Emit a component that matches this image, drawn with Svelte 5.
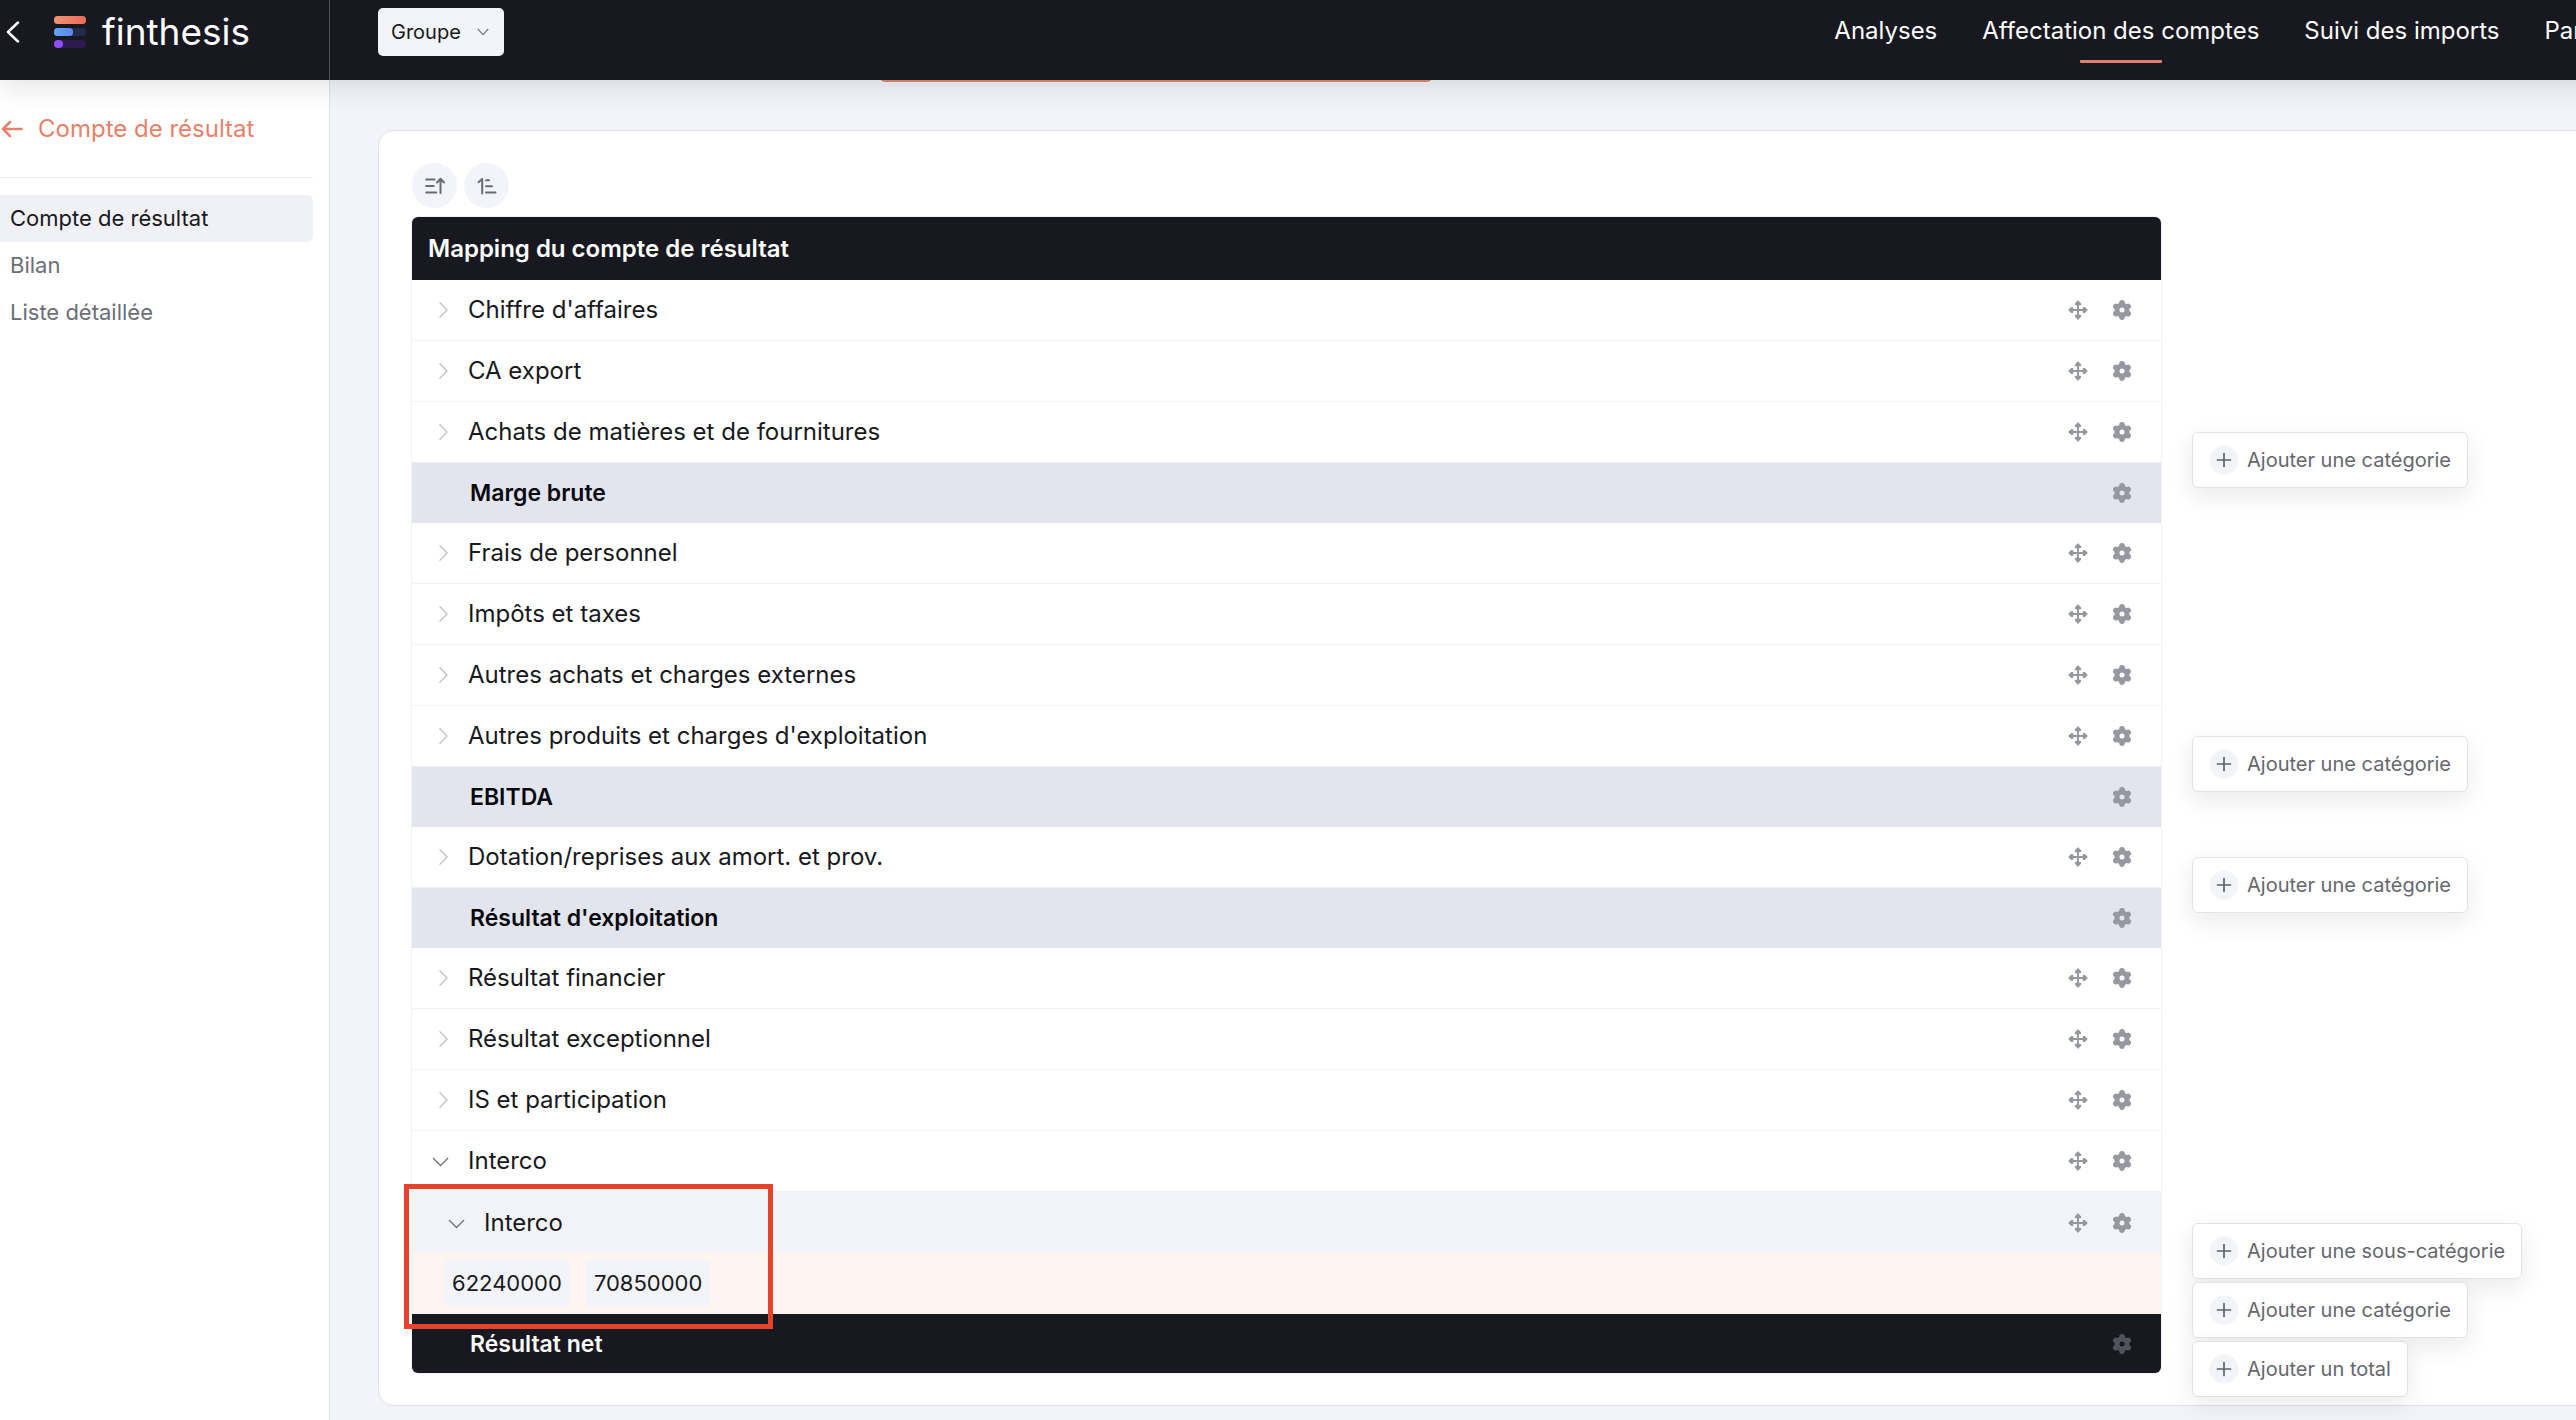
<script>
  const navItems = ['Analyses', 'Affectation des comptes', 'Suivi des imports', 'Paramètres'];
  const activeNav = 'Affectation des comptes';

  const sideLinks = ['Compte de résultat', 'Bilan', 'Liste détaillée'];
  const activeSide = 'Compte de résultat';

  const rows = [
    { label: "Chiffre d'affaires", kind: 'category' },
    { label: 'CA export', kind: 'category' },
    { label: 'Achats de matières et de fournitures', kind: 'category' },
    { label: 'Marge brute', kind: 'total' },
    { label: 'Frais de personnel', kind: 'category' },
    { label: 'Impôts et taxes', kind: 'category' },
    { label: 'Autres achats et charges externes', kind: 'category' },
    { label: "Autres produits et charges d'exploitation", kind: 'category' },
    { label: 'EBITDA', kind: 'total' },
    { label: 'Dotation/reprises aux amort. et prov.', kind: 'category' },
    { label: "Résultat d'exploitation", kind: 'total' },
    { label: 'Résultat financier', kind: 'category' },
    { label: 'Résultat exceptionnel', kind: 'category' },
    { label: 'IS et participation', kind: 'category' },
    { label: 'Interco', kind: 'category', open: true },
    { label: 'Interco', kind: 'sub', open: true },
    { accounts: ['62240000', '70850000'], kind: 'accounts' },
    { label: 'Résultat net', kind: 'final' }
  ];

  const lobes = [0, 60, 120, 180, 240, 300];
  const arms = [0, 90, 180, 270];
</script>

{#snippet chevron(open)}
  {#if open}
    <svg class="chev open" viewBox="0 0 18 18" aria-hidden="true"><path d="M-1 6 6.500 13.500 14 6" /></svg>
  {:else}
    <svg class="chev" viewBox="0 0 18 18" aria-hidden="true"><path d="M5.500 1.200 13 9l-7.500 7.800" /></svg>
  {/if}
{/snippet}

{#snippet gear()}
  <svg class="icon" viewBox="0 0 20 20" aria-hidden="true">
    <circle cx="10" cy="10" r="5" fill="none" stroke="currentColor" stroke-width="5" />
    {#each lobes as angle}
      <circle cx="10" cy="2.900" r="2.800" fill="currentColor" transform="rotate({angle} 10 10)" />
    {/each}
  </svg>
{/snippet}

{#snippet move()}
  <svg class="icon" viewBox="0 0 20 20" aria-hidden="true">
    <path d="M10 3v14M3 10h14" fill="none" stroke="currentColor" stroke-width="1.900" />
    {#each arms as angle}
      <path
        d="M10 1 12.500 3.600V4.600H7.500V3.600Z"
        fill="currentColor"
        stroke="currentColor"
        stroke-width="1.200"
        stroke-linejoin="round"
        transform="rotate({angle} 10 10)"
      />
    {/each}
  </svg>
{/snippet}

{#snippet addButton(text, place)}
  <button type="button" class="add {place}">
    <svg viewBox="0 0 30 30" aria-hidden="true">
      <circle cx="15" cy="15" r="14.500" fill="#f3f4fa" />
      <path d="M15 8.500v13M8.500 15h13" fill="none" stroke="#60626a" stroke-width="1.700" stroke-linecap="round" />
    </svg>
    <span>{text}</span>
  </button>
{/snippet}

<div class="viewport">
  <div class="page">
    <header>
      <div class="brand">
        <button type="button" class="collapse" aria-label="Réduire le menu">
          <svg viewBox="0 0 14 22" aria-hidden="true"><path d="M12 1.500 2 11l10 9.500" /></svg>
        </button>
        <a href="#accueil" class="logo">
          <svg viewBox="0 0 32 32" aria-hidden="true">
            <defs>
              <linearGradient id="bar-coral"><stop offset="0" stop-color="#f0936f" /><stop offset="1" stop-color="#ee6a5b" /></linearGradient>
              <linearGradient id="bar-blue"><stop offset="0" stop-color="#62a6f8" /><stop offset="1" stop-color="#5b84f3" /></linearGradient>
            </defs>
            <rect width="32" height="8" rx="3.500" fill="url(#bar-coral)" />
            <rect y="12" width="32" height="8" rx="3.500" fill="#212b4a" />
            <rect y="12" width="19" height="8" rx="3.500" fill="url(#bar-blue)" />
            <rect y="24" width="32" height="8" rx="3.500" fill="#2c1b4c" />
            <rect y="24" width="9" height="8" rx="4" fill="#8d4df5" />
          </svg>
          <span>finthesis</span>
        </a>
      </div>
      <div class="bar">
        <label class="scope">
          <select aria-label="Périmètre"><option>Groupe</option></select>
          <svg viewBox="0 0 12 8" aria-hidden="true"><path d="M.8 1 6 6.600 11.200 1" /></svg>
        </label>
        <nav class="top">
          {#each navItems as item}
            <a href="#nav" class:active={item === activeNav}>{item}</a>
          {/each}
        </nav>
      </div>
    </header>

    <div class="body">
      <aside class="side">
        <a href="#retour" class="back">
          <svg viewBox="0 0 22 18" aria-hidden="true"><path d="M20.500 9H2M9 2 2 9l7 7" /></svg>
          <span>Compte de résultat</span>
        </a>
        <nav>
          {#each sideLinks as link}
            <a href="#section" class:active={link === activeSide}>{link}</a>
          {/each}
        </nav>
      </aside>

      <main>
        <div class="notice"></div>
        <section class="card">
          <div class="tools">
            <button type="button" aria-label="Tout replier">
              <svg viewBox="0 0 20 18" aria-hidden="true"><path d="M1.200 2.500h8.500M1.200 9h7.500M1.200 15.500h10M15.500 16V2.500M12 5.500l3.500-3.700L19 5.500" /></svg>
            </button>
            <button type="button" aria-label="Trier">
              <svg viewBox="0 0 20 18" aria-hidden="true"><path d="M5.200 16.500V2L1.500 5.200M9 3.200h3M9 9.300h6M9 15.500h9.500" /></svg>
            </button>
          </div>

          <div class="columns">
            <div class="mapping">
              <table>
                <thead>
                  <tr><th colspan="2" scope="col">Mapping du compte de résultat</th></tr>
                </thead>
                <tbody>
                  {#each rows as row}
                    <tr class={row.kind}>
                      {#if row.kind === 'accounts'}
                        <td colspan="2">
                          <div class="chips">
                            {#each row.accounts as account}<span>{account}</span>{/each}
                          </div>
                        </td>
                      {:else}
                        <td>
                          <div class="name">
                            {#if row.kind === 'category' || row.kind === 'sub'}
                              <button type="button" aria-label="Déplier" aria-expanded={!!row.open}>{@render chevron(row.open)}</button>
                            {/if}
                            <span>{row.label}</span>
                          </div>
                        </td>
                        <td>
                          <div class="actions">
                            {#if row.kind === 'category' || row.kind === 'sub'}
                              <button type="button" aria-label="Déplacer">{@render move()}</button>
                            {/if}
                            <button type="button" aria-label="Paramètres">{@render gear()}</button>
                          </div>
                        </td>
                      {/if}
                    </tr>
                  {/each}
                </tbody>
              </table>
              <div class="highlight"></div>
            </div>

            <div class="adders">
              {@render addButton('Ajouter une catégorie', 'margin')}
              {@render addButton('Ajouter une catégorie', 'ebitda')}
              {@render addButton('Ajouter une catégorie', 'operating')}
              {@render addButton('Ajouter une sous-catégorie', 'nested')}
              {@render addButton('Ajouter une catégorie', 'stacked')}
              {@render addButton('Ajouter un total', 'stacked')}
            </div>
          </div>
        </section>
      </main>
    </div>
  </div>
</div>

<style>
  :global(body) {
    background: #f3f4fa;
  }
  .viewport {
    overflow: hidden;
    font-family: Inter, 'Open Sans', sans-serif;
    color: #181820;
  }
  .viewport * {
    box-sizing: border-box;
  }
  .page {
    display: flex;
    flex-direction: column;
    width: calc(100% + 98px);
    min-height: 100vh;
  }
  button {
    display: flex;
    align-items: center;
    justify-content: center;
    padding: 0;
    border: 0;
    background: none;
    color: inherit;
    font: inherit;
    cursor: pointer;
  }
  a {
    color: inherit;
    text-decoration: none;
  }
  svg {
    flex: none;
    display: block;
  }

  header {
    position: relative;
    z-index: 2;
    display: flex;
    height: 80px;
    background: #181820;
    color: #fff;
    box-shadow: 0 4px 30px rgba(24, 24, 32, 0.14);
  }
  .brand {
    display: flex;
    gap: 34px;
    width: 330px;
    height: 64px;
    align-items: center;
    padding-left: 6px;
  }
  .collapse svg {
    width: 14px;
    height: 22px;
    fill: none;
    stroke: #fff;
    stroke-width: 2.5;
    stroke-linecap: round;
    stroke-linejoin: round;
  }
  .logo {
    display: flex;
    align-items: center;
    gap: 16px;
    font-size: 37px;
    line-height: 40px;
  }
  .logo svg {
    width: 32px;
    height: 32px;
  }
  .bar {
    display: flex;
    flex: 1;
    align-items: flex-start;
    justify-content: space-between;
    padding: 8px 0 0 48px;
    border-left: 1px solid #4f5058;
    margin-left: -1px;
  }
  .scope {
    position: relative;
    display: flex;
    align-items: center;
  }
  select {
    height: 48px;
    padding: 0 43px 0 13px;
    border: 0;
    border-radius: 5px;
    background: #f3f4fa;
    color: #181820;
    font: 400 20px Inter, sans-serif;
    appearance: none;
  }
  .scope svg {
    position: absolute;
    right: 15px;
    width: 12px;
    height: 8px;
    fill: none;
    stroke: #777981;
    stroke-width: 1.2;
    pointer-events: none;
  }
  .top {
    display: flex;
    gap: 45px;
    font-size: 24px;
    line-height: 28px;
    padding-top: 9px;
  }
  .top a {
    display: flex;
    flex-direction: column;
    align-items: center;
  }
  .top .active::after {
    content: '';
    width: 82px;
    height: 3px;
    margin-top: 15px;
    border-radius: 1px;
    background: #de826e;
  }

  .body {
    display: flex;
    flex: 1;
  }
  .side {
    width: 330px;
    padding-right: 16px;
    border-right: 1px solid #e0e1e7;
    background: #fff;
  }
  .back {
    display: flex;
    align-items: center;
    gap: 15px;
    height: 98px;
    padding-left: 1px;
    border-bottom: 1px solid #eeeff2;
    color: #e5816a;
    font-size: 24px;
    line-height: 32px;
  }
  .back svg {
    width: 22px;
    height: 18px;
    fill: none;
    stroke: currentColor;
    stroke-width: 2.6;
    stroke-linecap: round;
    stroke-linejoin: round;
  }
  .side nav {
    padding-top: 17px;
  }
  .side nav a {
    display: block;
    padding: 8px 10px 9px;
    color: #6c6e76;
    font-size: 22px;
    line-height: 30px;
  }
  .side nav .active {
    border-radius: 0 6px 6px 0;
    background: #f0f1f6;
    color: #181820;
  }

  main {
    flex: 1;
    min-width: 0;
    padding: 0 58px 15px 48px;
  }
  .notice {
    width: 556px;
    height: 40px;
    margin: -38px 0 48px 500px;
    border: 2px solid #e08570;
    border-radius: 8px;
    background: #fdf0ec;
  }
  .card {
    padding: 32px 33px 8px;
    border: 1px solid #e1e3e9;
    border-radius: 16px;
    background: #fff;
  }
  .tools {
    display: flex;
    gap: 7px;
    margin-bottom: 9px;
  }
  .tools button {
    width: 45px;
    height: 45px;
    border-radius: 50%;
    background: #f3f4fa;
  }
  .tools svg {
    width: 20px;
    height: 18px;
    fill: none;
    stroke: #6a6c74;
    stroke-width: 2;
    stroke-linecap: round;
    stroke-linejoin: round;
  }
  .columns {
    display: flex;
    align-items: flex-start;
    gap: 31px;
  }
  .mapping {
    position: relative;
    flex: 1;
  }
  table {
    width: 100%;
    border-spacing: 0;
    border-radius: 6px;
    overflow: hidden;
    box-shadow: 0 0 0 1px #f1f2f5;
    font-size: 24px;
    line-height: 32px;
  }
  th {
    height: 63px;
    padding: 0 16px;
    background: #181820;
    color: #fff;
    font-weight: 600;
    text-align: left;
  }
  td {
    height: 61px;
    padding: 0;
    border-bottom: 1px solid #f1f2f5;
  }
  .name {
    display: flex;
    align-items: center;
    gap: 16px;
    padding-left: 22px;
  }
  .chev {
    width: 18px;
    height: 18px;
    fill: none;
    stroke: #c3c4c9;
    stroke-width: 1.4;
    overflow: visible;
  }
  .open {
    stroke: #74767e;
  }
  .actions {
    display: flex;
    justify-content: flex-end;
    gap: 24px;
    padding-right: 29px;
    color: #96989f;
  }
  .icon {
    width: 20px;
    height: 20px;
  }
  .total td {
    height: 60px;
    border: 0;
    background: #e2e5ee;
  }
  .total .name,
  .final .name {
    padding-left: 58px;
    font-size: 23px;
    font-weight: 600;
  }
  .total .name {
    color: #08080c;
  }
  .sub td {
    border: 0;
    background: #f3f4fa;
  }
  .sub .name {
    padding-left: 38px;
  }
  .accounts td {
    padding-bottom: 2px;
    border: 0;
    background: #fef5f0;
  }
  .final td {
    height: 59px;
    border: 0;
    background: #181820;
    color: #fff;
  }
  .final .actions {
    color: #52545c;
  }
  .chips {
    display: flex;
    gap: 16px;
    padding-left: 32px;
    font-size: 22px;
  }
  .chips span {
    padding: 8px;
    border-radius: 6px;
    background: #f3f4fa;
  }
  .highlight {
    position: absolute;
    left: -8px;
    bottom: 44px;
    width: 369px;
    height: 145px;
    border: 5px solid #e6432b;
    pointer-events: none;
  }

  .adders {
    display: flex;
    flex-direction: column;
    align-items: flex-start;
    width: 390px;
  }
  .add {
    gap: 8px;
    height: 56px;
    padding: 0 16px;
    border: 1px solid #e2e3e7;
    border-radius: 6px;
    background: #fff;
    color: #65676f;
    font-size: 20px;
    line-height: 28px;
    box-shadow: 0 8px 24px rgba(24, 24, 32, 0.09);
  }
  .add svg {
    width: 30px;
    height: 30px;
  }
  .margin {
    margin-top: 215px;
  }
  .ebitda {
    margin-top: 248px;
  }
  .operating {
    margin-top: 65px;
  }
  .nested {
    margin-top: 310px;
  }
  .stacked {
    margin-top: 3px;
  }
</style>
